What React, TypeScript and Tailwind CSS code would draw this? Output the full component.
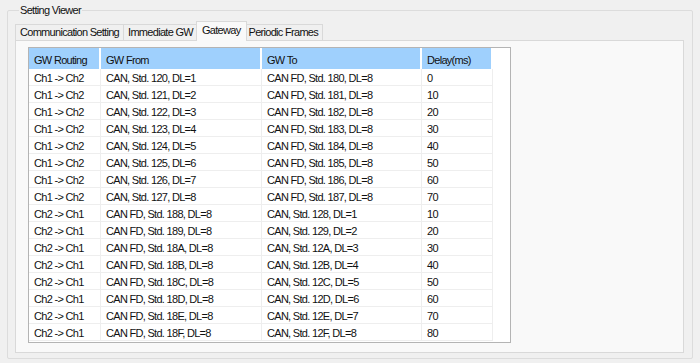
import React from "react";

type Row = { routing: string; from: string; to: string; delay: string };

const hex = ["0", "1", "2", "3", "4", "5", "6", "7", "8", "9", "A", "B", "C", "D", "E", "F"];

const rows: Row[] = [
  ...Array.from({ length: 8 }, (_, i) => ({
    routing: "Ch1 -> Ch2",
    from: `CAN, Std. 12${i}, DL=${i + 1}`,
    to: `CAN FD, Std. 18${i}, DL=8`,
    delay: String(i * 10),
  })),
  ...Array.from({ length: 8 }, (_, i) => ({
    routing: "Ch2 -> Ch1",
    from: `CAN FD, Std. 18${hex[i + 8]}, DL=8`,
    to: `CAN, Std. 12${hex[i + 8]}, DL=${i + 1}`,
    delay: String((i + 1) * 10),
  })),
];

const tabs = ["Communication Setting", "Immediate GW", "Gateway", "Periodic Frames"];

const cols = "grid grid-cols-[72px_161px_160px_71px_1fr]";

export default function App() {
  return (
    <div
      className="h-[363px] w-[700px] overflow-hidden bg-[#f0f0f0] pl-[7px] pt-[3px] text-[11px] tracking-[-0.7px] text-[#111]"
      style={{ fontFamily: '"Liberation Sans", Arial, sans-serif' }}
    >
      <fieldset className="h-[356px] w-[686px] rounded-[2px] border border-[#dcdcdc] px-[7px] pb-[5px]">
        <legend className="ml-[4px] px-[1px] leading-[14px]">Setting Viewer</legend>
        <div className="mt-[4px] flex h-[19px] items-end">
          {tabs.map((t) => {
            const active = t === "Gateway";
            return (
              <div
                key={t}
                className={
                  active
                    ? "relative z-10 -mx-[2px] -mb-px flex h-[20px] items-center border border-b-0 border-[#d9d9d9] bg-[#f9f9f9] px-[5px] pb-[3px]"
                    : "flex h-[16px] items-center border border-b-0 border-[#d9d9d9] bg-[#f0f0f0] px-[4px] -ml-px first:ml-0"
                }
              >
                {t}
              </div>
            );
          })}
        </div>
        <div className="h-[313px] w-[669px] border border-[#d9d9d9] bg-[#f9f9f9] pl-[12px] pt-[6px]">
          <div className="h-[296px] w-[483px] border border-[#b4b4b4] bg-white">
            <div className={`${cols} h-[21px]`}>
              {["GW Routing", "GW From", "GW To", "Delay(ms)"].map((h) => (
                <div key={h} className="mr-[2px] bg-[#9fd0fd] pl-[5px] pt-[4px] leading-[16px]">
                  {h}
                </div>
              ))}
              <div />
            </div>
            {rows.map((r, i) => (
              <div key={i} className={`${cols} h-[17px]`}>
                {[r.routing, r.from, r.to, r.delay].map((c, j) => (
                  <div key={j} className="border-b border-r border-[#eeeeee] pl-[5px] pt-[3px] leading-[13px]">
                    {c}
                  </div>
                ))}
                <div />
              </div>
            ))}
          </div>
        </div>
      </fieldset>
    </div>
  );
}
